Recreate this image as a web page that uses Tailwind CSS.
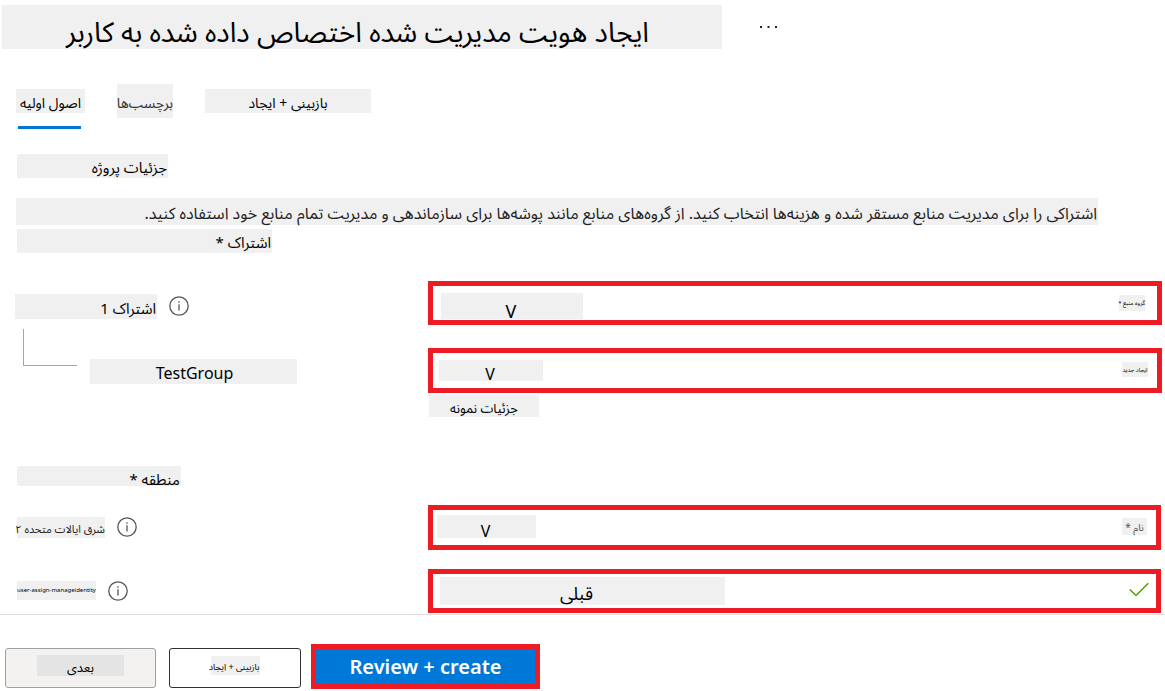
<!DOCTYPE html>
<html lang="fa" dir="ltr">
<head>
<meta charset="utf-8">
<meta name="viewport" content="width=device-width, initial-scale=1">
<title>ایجاد هویت مدیریت شده</title>
<script src="https://cdn.jsdelivr.net/npm/@tailwindcss/browser@4"></script>
</head>
<body class="bg-white text-black text-sm font-['Noto_Sans','Noto_Sans_Arabic','DejaVu_Sans',sans-serif]">
<div class="flex min-h-screen flex-col">
  <header class="flex items-start gap-[38px] pt-[5px] pl-[2px]">
    <h1 dir="rtl" class="h-11 w-[720px] bg-[#f0f0f0] pr-[73px] text-[28px] leading-[52px] whitespace-nowrap">ایجاد هویت مدیریت شده اختصاص داده شده به کاربر</h1>
    <button type="button" aria-label="گزینه‌های بیشتر" class="mt-[18px]">
      <svg class="h-2 w-[18px]" viewBox="0 0 18 8" fill="#222"><path d="M0 3h2v2H0zM7.500 3h2v2h-2zM15 3h2v2h-2z"/></svg>
    </button>
  </header>

  <nav class="mt-[35px] flex h-[45px] items-start pl-4">
    <a href="#basics" aria-current="page" class="flex w-[69px] flex-col pt-[5px]">
      <span dir="rtl" class="h-6 bg-[#f0f0f0] text-center text-sm leading-7 whitespace-nowrap">اصول اولیه</span>
      <span class="mt-[13px] mr-1 ml-[2px] h-[3px] bg-[#0078d4]"></span>
    </a>
    <a href="#tags" dir="rtl" class="ml-8 h-[34px] w-14 bg-[#f0f0f0] text-center text-sm leading-[38px] whitespace-nowrap text-[#333]">برچسب‌ها</a>
    <a href="#review" dir="rtl" class="mt-[5px] ml-8 h-6 w-[166px] bg-[#f0f0f0] text-center text-sm leading-7 whitespace-nowrap">بازبینی + ایجاد</a>
  </nav>

  <main class="flex-1 pt-[25px]">
    <h2 dir="rtl" class="ml-[17px] h-6 w-[151px] bg-[#f0f0f0] pr-px text-[15px] leading-[26px]">جزئیات پروژه</h2>
    <p dir="rtl" class="mt-5 mr-[67px] ml-4 h-[27px] bg-[#f0f0f0] pr-px text-base leading-[30px] whitespace-nowrap text-[#222]">اشتراکی را برای مدیریت منابع مستقر شده و هزینه‌ها انتخاب کنید. از گروه‌های منابع مانند پوشه‌ها برای سازماندهی و مدیریت تمام منابع خود استفاده کنید.</p>
    <h3 dir="rtl" class="mt-1 ml-[17px] h-6 w-[255px] bg-[#f0f0f0] pr-px text-[15px] leading-[26px]">اشتراک *</h3>

    <div class="mt-7 grid grid-cols-[428px_1fr] pr-[3px]">
      <div class="flex items-start gap-3 pt-[13px] pl-[15px]">
        <label for="sub" dir="rtl" class="h-[25px] w-[142px] bg-[#f0f0f0] pr-px text-[15px] leading-7">اشتراک 1</label>
        <svg class="mt-[2px] size-5" viewBox="0 0 20 20" fill="none" stroke="#555" stroke-width="1.300"><circle cx="10" cy="10" r="9.200"/><path d="M10 8.200v6.300M10 5.300v1.500"/></svg>
      </div>
      <div class="flex h-11 items-start justify-between border-5 border-[#ed1c24] pt-[7px] pr-3 pl-2">
        <select id="sub" class="h-[26px] w-[142px] appearance-none bg-[#f0f0f0] pt-2 pr-[2px] text-center text-lg leading-5"><option>V</option></select>
        <a href="#group" dir="rtl" class="mt-[2px] h-4 w-[26px] bg-[#f0f0f0] text-center text-[6px] leading-4 whitespace-nowrap">گروه منبع *</a>
      </div>
    </div>

    <div class="mt-1 grid grid-cols-[428px_1fr] pr-[3px]">
      <div class="flex items-start pl-[23px]">
        <span class="h-[37px] w-[54px] border-b border-l border-[#a6a6a6]"></span>
        <label for="group" class="mt-[30px] ml-[13px] h-[25px] w-[207px] bg-[#f0f0f0] pl-[2px] text-center text-base leading-7">TestGroup</label>
      </div>
      <div class="mt-[19px] flex h-[45px] items-start justify-between border-5 border-[#ed1c24] pt-[7px] pr-[9px] pl-[6px]">
        <select id="group" class="h-[21px] w-[104px] appearance-none bg-[#f0f0f0] pt-[6px] pr-[2px] text-center text-base leading-4"><option>V</option></select>
        <a href="#new" dir="rtl" class="mt-[2px] h-[15px] w-[26px] bg-[#f0f0f0] text-center text-[6px] leading-4 whitespace-nowrap">ایجاد جدید</a>
      </div>
    </div>
    <h2 dir="rtl" class="mt-[2px] ml-[429px] h-[22px] w-[110px] bg-[#f0f0f0] text-center text-[13px] leading-[26px]">جزئیات نمونه</h2>

    <h3 dir="rtl" class="mt-[49px] ml-[17px] h-5 w-[164px] bg-[#f0f0f0] pr-px text-[15px] leading-[26px]">منطقه *</h3>

    <div class="mt-[19px] grid grid-cols-[428px_1fr] pr-1">
      <div class="flex items-start gap-3 pt-3 pl-[17px]">
        <label for="region" dir="rtl" class="h-[21px] w-[88px] bg-[#f0f0f0] text-center text-[11px] leading-[23px] whitespace-nowrap text-[#222]">شرق ایالات متحده ۲</label>
        <svg class="size-5" viewBox="0 0 20 20" fill="none" stroke="#555" stroke-width="1.300"><circle cx="10" cy="10" r="9.200"/><path d="M10 8.200v6.300M10 5.300v1.500"/></svg>
      </div>
      <div class="flex h-[45px] items-start justify-between border-5 border-[#ed1c24] pt-[5px] pr-[9px] pl-1">
        <select id="region" class="h-[23px] w-[99px] appearance-none bg-[#f0f0f0] pt-2 pr-[2px] text-center text-base leading-4"><option>V</option></select>
        <label for="name" dir="rtl" class="mt-[3px] h-[17px] w-[25px] bg-[#f0f0f0] text-center text-[10px] leading-[18px] whitespace-nowrap text-[#555]">نام *</label>
      </div>
    </div>

    <div class="mt-[19px] grid grid-cols-[428px_1fr] pr-1">
      <div class="flex items-start gap-3 pt-3 pl-[17px]">
        <span class="h-[19px] w-[79px] bg-[#f0f0f0] text-center text-[6px] leading-[19px] whitespace-nowrap">user-assign-manageidentity</span>
        <svg class="size-5" viewBox="0 0 20 20" fill="none" stroke="#555" stroke-width="1.300"><circle cx="10" cy="10" r="9.200"/><path d="M10 8.200v6.300M10 5.300v1.500"/></svg>
      </div>
      <div class="flex h-11 items-start justify-between border-5 border-[#ed1c24] pt-[3px] pr-[7px] pl-[7px]">
        <input id="name" type="text" dir="rtl" value="قبلی" class="h-7 w-[285px] bg-[#f0f0f0] pt-[6px] pr-3 text-center text-lg leading-[26px]">
        <svg class="mt-[5px] h-4 w-5" viewBox="0 0 20 16" fill="none" stroke="#57a300" stroke-width="1.600"><path d="M.7 7.500L7 13.500 19.300 1.200"/></svg>
      </div>
    </div>
  </main>

  <footer class="mt-px flex items-start border-t border-[#dedede] pt-[29px] pb-[2px] pl-[5px]">
    <button type="button" class="mt-1 flex h-10 w-[151px] justify-center rounded-[3px] border border-[#a19f9d] bg-[#f3f2f1] pt-[6px]"><span dir="rtl" class="h-[21px] w-[87px] bg-[#e4e4e4] text-[13px] leading-[25px]">بعدی</span></button>
    <button type="button" class="mt-1 ml-[13px] flex h-10 w-[132px] justify-center rounded-[3px] border border-[#323130] bg-white pt-[7px]"><span dir="rtl" class="h-[19px] w-[49px] bg-[#f0f0f0] text-[9px] leading-[21px] whitespace-nowrap">بازبینی + ایجاد</span></button>
    <button type="button" class="ml-[10px] h-[45px] w-[229px] border-5 border-[#ed1c24] bg-[#0078d7] font-['Noto_Sans',sans-serif] text-xl font-semibold text-white">Review + create</button>
  </footer>
</div>
</body>
</html>
